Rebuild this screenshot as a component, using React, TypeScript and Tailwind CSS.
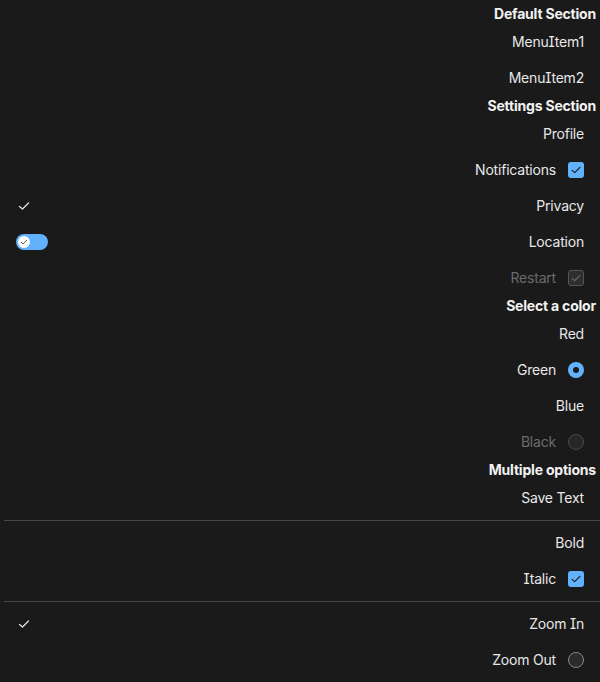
import type { ReactNode } from "react";

function Check({ className }: { className?: string }) {
  return (
    <svg viewBox="0 0 16 16" className={className} fill="none" stroke="currentColor" strokeWidth={1.3} strokeLinecap="round" strokeLinejoin="round">
      <path d="M3.5 8.5l3 2.5 6-6" />
    </svg>
  );
}

function Header({ children }: { children: ReactNode }) {
  return <div className="flex h-5 items-center justify-end pr-1 text-sm font-bold text-[#f2f2f2]">{children}</div>;
}

function Item({ label, left, right, disabled }: { label: string; left?: ReactNode; right?: ReactNode; disabled?: boolean }) {
  return (
    <div className="flex h-9 items-center px-4">
      <div className="flex w-8 items-center">{left}</div>
      <div className={`flex flex-1 items-center justify-end gap-3 text-sm ${disabled ? "text-[#6b6b6b]" : "text-[#e8e8e8]"}`}>
        <span>{label}</span>
        {right}
      </div>
    </div>
  );
}

function Box({ disabled }: { disabled?: boolean }) {
  return disabled ? (
    <span className="flex h-4 w-4 items-center justify-center rounded-[3px] border border-[#555] bg-[#2e2e2e] text-[#6e6e6e]">
      <Check className="h-3.5 w-3.5" />
    </span>
  ) : (
    <span className="flex h-4 w-4 items-center justify-center rounded-[3px] bg-[#62b1fd] text-[#1a1a1a]">
      <Check className="h-3.5 w-3.5" />
    </span>
  );
}

function Radio({ on, disabled }: { on?: boolean; disabled?: boolean }) {
  if (on)
    return (
      <span className="flex h-4 w-4 items-center justify-center rounded-full bg-[#62b1fd]">
        <span className="h-1.5 w-1.5 rounded-full bg-[#1a1a1a]" />
      </span>
    );
  return <span className={`h-4 w-4 rounded-full border ${disabled ? "border-[#4a4a4a] bg-[#262626]" : "border-[#8a8a8a] bg-[#2a2a2a]"}`} />;
}

function Toggle() {
  return (
    <span className="flex h-4 w-8 items-center rounded-full bg-[#62b1fd] pl-0.5">
      <span className="flex h-3 w-3 items-center justify-center rounded-full bg-white text-[#333]">
        <Check className="h-2.5 w-2.5" />
      </span>
    </span>
  );
}

function Divider() {
  return <div className="my-1 ml-1 h-px bg-[#454545]" />;
}

export default function App() {
  return (
    <div className="min-h-[682px] bg-[#1a1a1a] pt-1 font-['Inter',sans-serif] tracking-[-0.2px] [font-feature-settings:'cv08']">
      <Header>Default Section</Header>
      <Item label="MenuItem1" />
      <Item label="MenuItem2" />
      <Header>Settings Section</Header>
      <Item label="Profile" />
      <Item label="Notifications" right={<Box />} />
      <Item label="Privacy" left={<Check className="h-4 w-4 text-[#e0e0e0]" />} />
      <Item label="Location" left={<Toggle />} />
      <Item label="Restart" right={<Box disabled />} disabled />
      <Header>Select a color</Header>
      <Item label="Red" />
      <Item label="Green" right={<Radio on />} />
      <Item label="Blue" />
      <Item label="Black" right={<Radio disabled />} disabled />
      <Header>Multiple options</Header>
      <Item label="Save Text" />
      <Divider />
      <Item label="Bold" />
      <Item label="Italic" right={<Box />} />
      <Divider />
      <Item label="Zoom In" left={<Check className="h-4 w-4 text-[#e0e0e0]" />} />
      <Item label="Zoom Out" right={<Radio />} />
    </div>
  );
}
